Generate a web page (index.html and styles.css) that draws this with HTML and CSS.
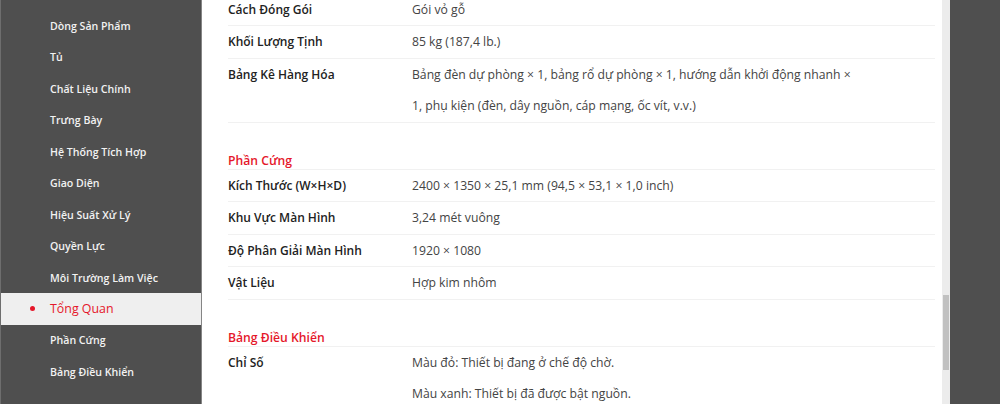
FILE: index.html
```html
<!DOCTYPE html>
<html lang="vi">
<head>
<meta charset="utf-8">
<title>Thông số</title>
<link rel="stylesheet" href="styles.css">
</head>
<body>
<div class="page">
  <nav class="sidebar">
    <a class="nav-item">Dòng Sản Phẩm</a>
    <a class="nav-item">Tủ</a>
    <a class="nav-item">Chất Liệu Chính</a>
    <a class="nav-item">Trưng Bày</a>
    <a class="nav-item">Hệ Thống Tích Hợp</a>
    <a class="nav-item">Giao Diện</a>
    <a class="nav-item">Hiệu Suất Xử Lý</a>
    <a class="nav-item">Quyền Lực</a>
    <a class="nav-item">Môi Trường Làm Việc</a>
    <a class="nav-item active">Tổng Quan</a>
    <a class="nav-item">Phần Cứng</a>
    <a class="nav-item">Bảng Điều Khiển</a>
  </nav>
  <main class="content">
    <div class="specs">
      <section class="group first">
        <div class="row"><div class="label">Cách Đóng Gói</div><div class="value">Gói vỏ gỗ</div></div>
        <div class="row"><div class="label">Khối Lượng Tịnh</div><div class="value">85 kg (187,4 lb.)</div></div>
        <div class="row"><div class="label">Bảng Kê Hàng Hóa</div><div class="value">Bảng đèn dự phòng × 1, bảng rổ dự phòng × 1, hướng dẫn khởi động nhanh ×<br>1, phụ kiện (đèn, dây nguồn, cáp mạng, ốc vít, v.v.)</div></div>
      </section>
      <section class="group">
        <h3 class="group-title">Phần Cứng</h3>
        <div class="row"><div class="label">Kích Thước (W×H×D)</div><div class="value">2400 × 1350 × 25,1 mm (94,5 × 53,1 × 1,0 inch)</div></div>
        <div class="row"><div class="label">Khu Vực Màn Hình</div><div class="value">3,24 mét vuông</div></div>
        <div class="row"><div class="label">Độ Phân Giải Màn Hình</div><div class="value">1920 × 1080</div></div>
        <div class="row"><div class="label">Vật Liệu</div><div class="value">Hợp kim nhôm</div></div>
      </section>
      <section class="group">
        <h3 class="group-title">Bảng Điều Khiển</h3>
        <div class="row"><div class="label">Chỉ Số</div><div class="value"><p>Màu đỏ: Thiết bị đang ở chế độ chờ.</p><p>Màu xanh: Thiết bị đã được bật nguồn.</p></div></div>
      </section>
    </div>
  </main>
  <div class="scrollbar"><div class="thumb"></div></div>
</div>
</body>
</html>
```

FILE: styles.css
```css
* { box-sizing: border-box; }
html, body {
  margin: 0;
  padding: 0;
  height: 100%;
}
body {
  background: #4f4f4f;
  font-family: "Open Sans", "Liberation Sans", sans-serif;
  overflow: hidden;
}
.page {
  display: flex;
  height: 404px;
}
.sidebar {
  width: 202px;
  flex: none;
  background: #4f4f4f;
  border-left: 1px solid #6e6e6e;
  border-right: 1px solid #858585;
  padding-top: 10.3px;
  display: flex;
  flex-direction: column;
}
.nav-item {
  display: flex;
  align-items: center;
  height: 31.45px;
  padding-left: 29px;
  color: #f2f2f2;
  font-size: 10.6px;
  font-weight: 600;
  text-decoration: none;
  white-space: nowrap;
}
.nav-item::before {
  content: "";
  width: 5px;
  height: 5px;
  border-radius: 50%;
  margin-right: 15px;
  background: transparent;
  flex: none;
}
.nav-item.active {
  background: #efefef;
  color: #e5172a;
  font-size: 12.4px;
  font-weight: 400;
}
.nav-item.active::before {
  background: #e5172a;
}
.content {
  width: 740px;
  flex: none;
  background: #ffffff;
  overflow: hidden;
  padding: 0 7px 0 26px;
}
.specs {
  margin-top: -6.2px;
}
.group { margin-top: 30px; }
.group.first { margin-top: 0; }
.group-title {
  margin: 0;
  font-size: 12.2px;
  font-weight: 600;
  line-height: 16px;
  color: #e5172a;
  border-bottom: 1px solid #f1f1f1;
}
.row {
  display: flex;
  border-bottom: 1px solid #f1f1f1;
  font-size: 12px;
  line-height: 31.5px;
}
.label {
  width: 184px;
  flex: none;
  color: #222222;
  font-weight: 600;
}
.value {
  color: #444444;
  font-size: 12.2px;
  white-space: nowrap;
}
.value p { margin: 0; }
.scrollbar {
  width: 8px;
  flex: none;
  background: #ececec;
  padding: 295px 1px 0 1px;
}
.thumb {
  height: 75px;
  background: #c1c1c1;
}
```
